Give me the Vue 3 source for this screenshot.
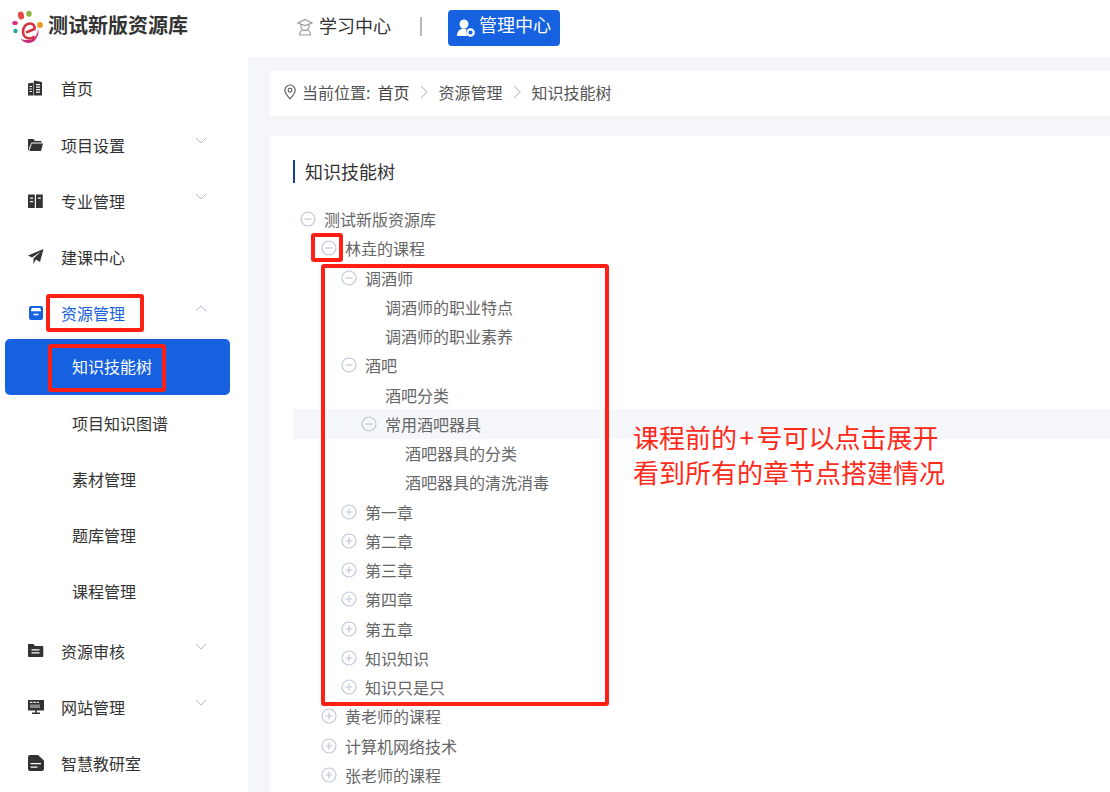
<script setup>
const menu = [
  { label: '首页', icon: 'home' },
  { label: '项目设置', icon: 'folder', arrow: 'down' },
  { label: '专业管理', icon: 'book', arrow: 'down' },
  { label: '建课中心', icon: 'plane' },
  { label: '资源管理', icon: 'box', arrow: 'up', active: true },
]
const subs = ['项目知识图谱', '素材管理', '题库管理', '课程管理']
const menu2 = [
  { label: '资源审核', icon: 'audit', arrow: 'down' },
  { label: '网站管理', icon: 'monitor', arrow: 'down' },
  { label: '智慧教研室', icon: 'doc' },
]
const tree = [
  { t: '测试新版资源库', l: 0, i: 'm' },
  { t: '林垚的课程', l: 1, i: 'm' },
  { t: '调酒师', l: 2, i: 'm' },
  { t: '调酒师的职业特点', l: 3 },
  { t: '调酒师的职业素养', l: 3 },
  { t: '酒吧', l: 2, i: 'm' },
  { t: '酒吧分类', l: 3 },
  { t: '常用酒吧器具', l: 3, i: 'm', hl: true },
  { t: '酒吧器具的分类', l: 4 },
  { t: '酒吧器具的清洗消毒', l: 4 },
  { t: '第一章', l: 2, i: 'p' },
  { t: '第二章', l: 2, i: 'p' },
  { t: '第三章', l: 2, i: 'p' },
  { t: '第四章', l: 2, i: 'p' },
  { t: '第五章', l: 2, i: 'p' },
  { t: '知识知识', l: 2, i: 'p' },
  { t: '知识只是只', l: 2, i: 'p' },
  { t: '黄老师的课程', l: 1, i: 'p' },
  { t: '计算机网络技术', l: 1, i: 'p' },
  { t: '张老师的课程', l: 1, i: 'p' },
]
const icons = {
  home: 'M0 3.500 5.500 2.500V15.500H0ZM6 .5 14 2V15.500H6ZM8 4v1.300h4V4ZM8 6.500v1.300h4V6.500ZM8 9v1.300h4V9ZM8 11.500v1.300h4v-1.300ZM1.500 6v1h2.500V6ZM1.500 8.500v1h2.500v-1ZM1.500 11v1h2.500v-1Z',
  folder: 'M0 2h5.500l1.500 2h6.500v1.500H3.500L1 11V13H0ZM3.800 6.500H15l-2 7.500H1.300Z',
  book: 'M0 1.500h6.800V15H0ZM8 1.500h6.800V15H8ZM2 4.500v1.300h3V4.500ZM2 8v1.300h3V8ZM9.800 4.500v1.300h3V4.500Z',
  plane: 'M15.500 0 12 13 8 10.500 5.500 15V9.500L13 2.500 4 8.500 0 6.500Z',
  box: 'M3 1h10a2 2 0 0 1 2 2v10a2 2 0 0 1-2 2H3a2 2 0 0 1-2-2V3a2 2 0 0 1 2-2ZM3.800 3 2.800 6.300H13.200L12.200 3ZM5.500 8.800v1.400h5V8.800Z',
  audit: 'M0 1h5.500L7 3h7.500a.8.8 0 0 1 .8.8V13a1 1 0 0 1-1 1H1a1 1 0 0 1-1-1ZM3.500 6.300v1.100h8V6.300ZM3.500 9.300v1.100h8V9.300Z',
  monitor: 'M0 1h16v10.500H0ZM2 2.800v1.300h2.400V2.800ZM5.500 2.800v1.300h2.400V2.800ZM9 2.800v1.300h1.800V2.800ZM7.200 11.500h1.600V13.500H12V15H4v-1.500h3.200Z',
  doc: 'M2 0H10l6 5.500V14a2 2 0 0 1-2 2H2a2 2 0 0 1-2-2V2a2 2 0 0 1 2-2ZM2.500 8v1.300H13V8ZM2.500 11.500v1.300H9.500v-1.300Z',
}
</script>

<template>
  <div class="page">
    <header class="topbar">
      <div class="brand">
        <svg class="logo" width="34" height="32" viewBox="0 0 34 32">
          <ellipse cx="9" cy="4.500" rx="3" ry="4" fill="#e8483f" transform="rotate(-15 9 4.500)" />
          <ellipse cx="17" cy="2.800" rx="2.700" ry="3" fill="#8cb43f" />
          <ellipse cx="3" cy="12" rx="2.800" ry="2.100" fill="#d9307a" />
          <circle cx="3.500" cy="20" r="2.200" fill="#2ba59a" />
          <circle cx="28" cy="14" r="2.900" fill="#e89a1c" />
          <g transform="translate(1.500 1)">
            <path d="M12.500 20.500 21 17c.8-2.800-1.500-5.500-4.500-5.500-4 0-7 3.500-7 8 0 4.500 3 7 6.500 7 2 0 3.500-.7 5-2" fill="none" stroke="#d8323f" stroke-width="2.600" />
            <path d="M7 27c5 6 13 5 16-1 2-3 2.500-6 1.500-9.500 0 6-4 11.500-9.500 11.500-3 0-5 0-8-1Z" fill="#c72e78" />
          </g>
        </svg>
        <span class="brand-name">测试新版资源库</span>
      </div>
      <nav class="topnav">
        <div class="study">
          <svg width="18" height="18" viewBox="0 0 18 18" fill="none" stroke="#9b9b9b" stroke-width="1.200">
            <path d="M9 1.500 16 5 9 7.500 2 5ZM5 6.500v2a4 4 0 0 0 8 0v-2M3.500 17c0-3.500 2-5 5.500-5s5.500 1.500 5.500 5Z" />
          </svg>
          <span class="nav-text">学习中心</span>
        </div>
        <i class="divider"></i>
        <div class="manage">
          <svg width="20" height="20" viewBox="0 0 20 20" fill="#fff">
            <circle cx="8" cy="6" r="4.500" />
            <path d="M1 18c0-5 3-7.500 7-7.500 1 0 2 .2 2.500.5-1 2.500-.5 5 1 7Z" />
            <circle cx="14.500" cy="14.500" r="3.200" fill="none" stroke="#fff" stroke-width="2.200" />
          </svg>
          <span class="nav-text">管理中心</span>
        </div>
      </nav>
    </header>

    <div class="body">
      <aside class="sidebar">
        <div class="menu">
          <div v-for="m in menu" :key="m.label" class="item" :class="{ active: m.active }">
            <svg class="mi" width="16" height="16" viewBox="0 0 16 16" fill-rule="evenodd">
              <path :d="icons[m.icon]" />
            </svg>
            <span class="lb">{{ m.label }}</span>
            <svg v-if="m.arrow" class="arrow" width="12" height="7" viewBox="0 0 12 7" fill="none" stroke-width="1">
              <path :d="m.arrow === 'down' ? 'M1 1l5 5 5-5' : 'M1 6l5-5 5 5'" />
            </svg>
          </div>
          <div class="sub current"><span>知识技能树</span></div>
          <div v-for="s in subs" :key="s" class="sub"><span>{{ s }}</span></div>
          <div v-for="m in menu2" :key="m.label" class="item lower">
            <svg class="mi" width="16" height="16" viewBox="0 0 16 16" fill-rule="evenodd">
              <path :d="icons[m.icon]" />
              <rect v-if="m.icon === 'monitor'" x="2" y="5.500" width="10" height="3.500" fill="#8a8a8a" />
            </svg>
            <span class="lb">{{ m.label }}</span>
            <svg v-if="m.arrow" class="arrow" width="12" height="7" viewBox="0 0 12 7" fill="none" stroke-width="1">
              <path d="M1 1l5 5 5-5" />
            </svg>
          </div>
        </div>
      </aside>

      <main class="main">
        <div class="crumb">
          <svg width="14" height="16" viewBox="0 0 14 16" fill="none" stroke="#555" stroke-width="1.100">
            <path d="M7 14.800C3.500 11 1.800 8.500 1.800 6.200a5.200 5.200 0 0 1 10.400 0C12.200 8.500 10.500 11 7 14.800Z" />
            <circle cx="7" cy="6.200" r="1.900" />
          </svg>
          <span class="pos">当前位置:</span>
          <span class="c1">首页</span>
          <svg class="sep" width="8" height="14" viewBox="0 0 8 14" fill="none" stroke="#c8cbd2" stroke-width="1.300"><path d="M1 1l6 6-6 6" /></svg>
          <span>资源管理</span>
          <svg class="sep" width="8" height="14" viewBox="0 0 8 14" fill="none" stroke="#c8cbd2" stroke-width="1.300"><path d="M1 1l6 6-6 6" /></svg>
          <span>知识技能树</span>
        </div>
        <section class="panel">
          <h2 class="title">知识技能树</h2>
          <div class="tree">
            <div v-for="n in tree" :key="n.t" class="node" :class="['l' + n.l, { hl: n.hl, leaf: !n.i }]">
              <svg v-if="n.i" class="ti" width="16" height="16" viewBox="0 0 16 16" fill="none" stroke="#c0c8d4" stroke-width="1.200">
                <circle cx="8" cy="8" r="7" />
                <path :d="n.i === 'm' ? 'M4.500 8h7' : 'M4.500 8h7M8 4.500v7'" />
              </svg>
              <span class="tx">{{ n.t }}</span>
            </div>
          </div>
        </section>
      </main>
    </div>

    <div class="box b1"></div>
    <div class="box b2"></div>
    <div class="box b3"></div>
    <div class="box b4"></div>
    <div class="note">课程前的<span class="plus">+</span>号可以点击展开<br />看到所有的章节点搭建情况</div>
  </div>
</template>

<style>
html, body { margin: 0; overflow: hidden; background: #fff; }
</style>

<style scoped>
.page {
  position: relative;
  width: 1110px;
  height: 792px;
  overflow: hidden;
  font-family: "Noto Sans CJK SC", "Noto Sans", sans-serif;
  color: #333;
  background: #fff;
}
.topbar {
  display: flex;
  align-items: center;
  height: 57px;
  padding-left: 12px;
  padding-bottom: 1px;
  box-sizing: border-box;
  background: #fff;
}
.brand {
  display: flex;
  align-items: center;
  gap: 2px;
  width: 284px;
  font-size: 20px;
  font-weight: 700;
  color: #333;
  padding-bottom: 6px;
}
.brand-name { padding-bottom: 2px; }
.logo { margin-top: 4px; overflow: visible; }
.topnav { display: flex; align-items: center; }
.study { display: flex; align-items: center; gap: 5px; font-size: 18px; color: #333; padding-bottom: 3px; }
.nav-text { padding-bottom: 4px; }
.divider { width: 2px; height: 19px; background: #b8b8b8; margin: 0 26px 3px 29px; }
.manage {
  display: flex;
  align-items: center;
  gap: 3px;
  height: 36px;
  padding: 0 9px 0 8px;
  border-radius: 4px;
  background: #1661e0;
  color: #fff;
  font-size: 18px;
  box-sizing: border-box;
}
.manage .nav-text { padding-bottom: 8px; }
.body { display: flex; height: 735px; }
.sidebar { width: 248px; flex: none; background: #fff; }
.menu { padding-top: 4px; }
.item {
  position: relative;
  display: flex;
  align-items: center;
  height: 56px;
  padding-left: 28px;
  font-size: 16px;
  color: #333;
}
.item:first-child { margin-top: -1px; height: 57px; padding-bottom: 2px; box-sizing: border-box; }
.mi { flex: none; fill: #333; }
.lb { margin-left: 17px; }
.arrow { position: absolute; left: 195px; top: 20px; stroke: #b4bac6; }
.item.active { color: #1661e0; }
.item.active .mi { fill: #1661e0; }
.item.active .arrow { stroke: #a8bfe8; }
.sub {
  display: flex;
  align-items: center;
  height: 56px;
  padding-left: 72px;
  font-size: 16px;
  color: #333;
}
.sub.current {
  margin: -2px 18px 0 5px;
  padding-left: 67px;
  padding-bottom: 2px;
  box-sizing: border-box;
  background: #1661e0;
  color: #fff;
  border-radius: 5px;
}
.sub + .lower { margin-top: 4px; }
.main {
  flex: 1;
  background: #f4f6fa;
  padding: 14px 0 0 22px;
  min-width: 0;
}
.crumb {
  display: flex;
  align-items: center;
  height: 45px;
  padding-left: 13px;
  padding-bottom: 3px;
  box-sizing: border-box;
  background: #fff;
  font-size: 16px;
  color: #555;
}
.pos { margin-left: 5px; margin-right: 7px; }
.c1 { color: #444; }
.sep { margin: 0 10px 0 11px; }
.panel {
  margin-top: 20px;
  height: 660px;
  background: #fff;
  padding: 24px 0 0 23px;
}
.title {
  margin: 0;
  height: 23px;
  line-height: 22px;
  padding-left: 10px;
  border-left: 2px solid #16438f;
  font-size: 18px;
  font-weight: 400;
  color: #333;
}
.tree { margin-top: 21.600px; }
.node {
  display: flex;
  align-items: center;
  height: 29.260px;
  font-size: 16px;
  color: #666;
}
.ti { flex: none; }
.tx { margin-left: 8px; }
.l0 { padding-left: 7px; }
.l1 { padding-left: 28px; }
.l2 { padding-left: 48px; }
.l3 { padding-left: 68px; }
.l4 { padding-left: 88px; }
.leaf .tx { margin-left: 24px; }
.hl { background: #f5f7fa; }
.box {
  position: absolute;
  border: 4px solid #ff1f14;
  border-radius: 3px;
  box-sizing: border-box;
  pointer-events: none;
}
.b1 { left: 46px; top: 294px; width: 98px; height: 38px; }
.b2 { left: 48px; top: 344px; width: 118px; height: 48px; }
.b3 { left: 311px; top: 233px; width: 32px; height: 29px; }
.b4 { left: 321px; top: 264px; width: 288px; height: 442px; }
.note {
  position: absolute;
  left: 633px;
  top: 419px;
  font-size: 26px;
  line-height: 35px;
  color: #ff2a1a;
}
.plus { padding: 0 2.500px; }
</style>
